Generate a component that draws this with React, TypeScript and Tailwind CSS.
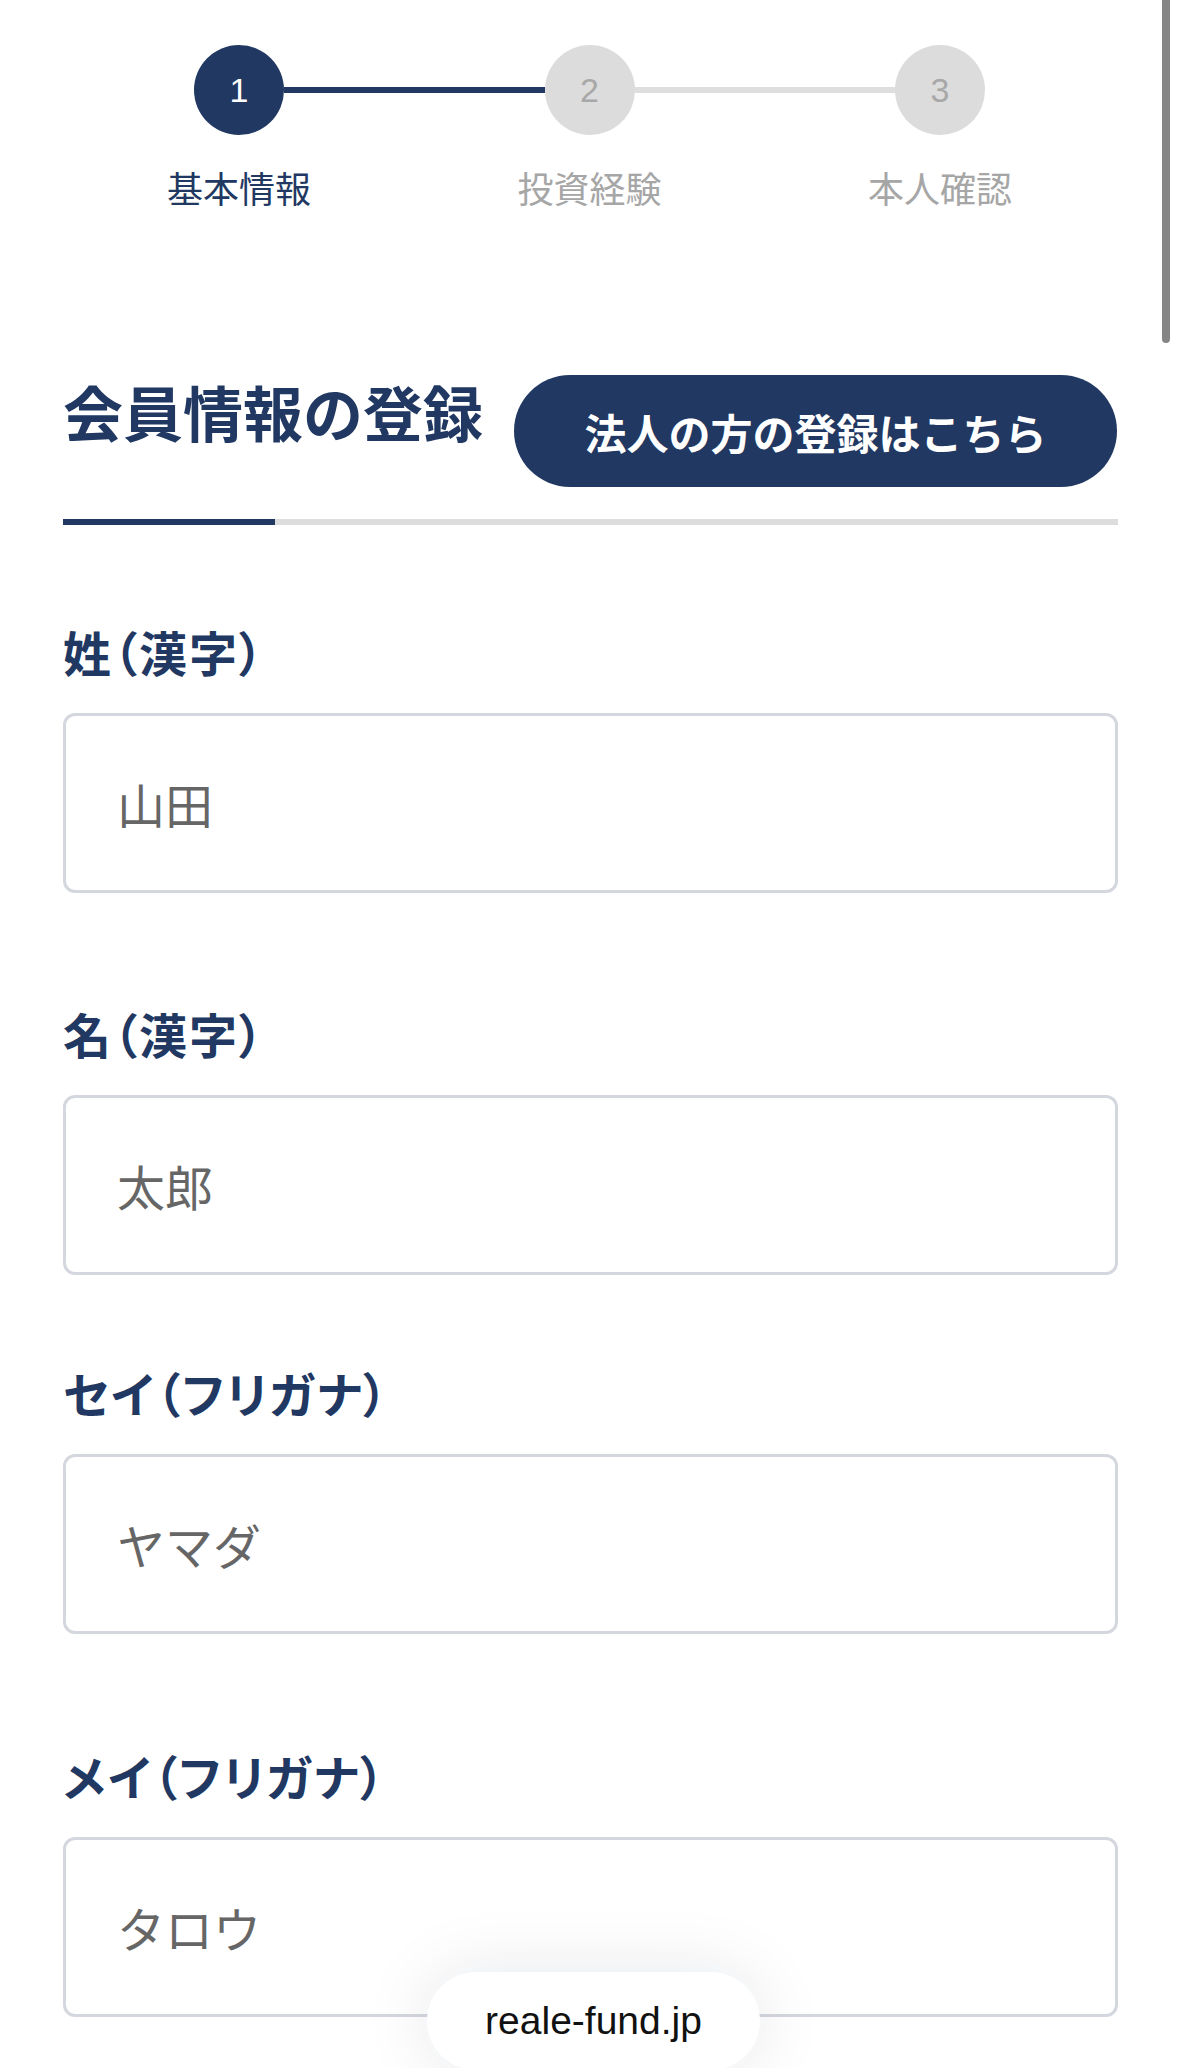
import React from "react";

const NAVY = "text-[#213862]";

function Step({ n, active }: { n: number; active: boolean }) {
  return (
    <div
      className={
        "flex h-[90px] w-[90px] shrink-0 items-center justify-center rounded-full font-['Liberation_Sans',sans-serif] text-[34px] " +
        (active ? "bg-[#213862] text-white" : "bg-[#dcdcdc] text-[#a8a8a8]")
      }
    >
      {n}
    </div>
  );
}

function StepLabel({ text, active }: { text: string; active: boolean }) {
  return (
    <div className="flex w-[90px] justify-center">
      <span
        className={
          "whitespace-nowrap text-[36px] leading-[54px] " +
          (active ? "text-[#213862]" : "text-[#a6a6a6]")
        }
      >
        {text}
      </span>
    </div>
  );
}

function Field({
  label,
  value,
  gapTop,
}: {
  label: string;
  value: string;
  gapTop: string;
}) {
  return (
    <div className={gapTop}>
      <div
        className={
          "text-[48px] font-bold leading-[72px] tracking-[2px] [font-feature-settings:'palt'] " +
          NAVY
        }
      >
        {label}
      </div>
      <div className="mt-[26px] flex h-[180px] items-center rounded-[12px] border-[3px] border-[#d5d7de] bg-white pl-[51px]">
        <span className="text-[48px] leading-none text-[#666666]">{value}</span>
      </div>
    </div>
  );
}

export default function App() {
  return (
    <div className="relative h-[2068px] w-[1179px] overflow-hidden bg-white font-['Noto_Sans_CJK_JP','Noto_Sans',sans-serif]">
      <div className="pl-[63px] pr-[61px]">
        {/* Stepper */}
        <div className="pt-[45px]">
          <div className="ml-[131px] mr-[133px] flex items-center">
            <Step n={1} active />
            <div className="h-[6px] flex-1 bg-[#213862]" />
            <Step n={2} active={false} />
            <div className="h-[6px] flex-1 bg-[#dedede]" />
            <Step n={3} active={false} />
          </div>
          <div className="ml-[131px] mr-[133px] mt-[25px] flex justify-between">
            <StepLabel text="基本情報" active />
            <StepLabel text="投資経験" active={false} />
            <StepLabel text="本人確認" active={false} />
          </div>
        </div>

        {/* Heading */}
        <div className="mt-[152px] flex items-start gap-[31px]">
          <h1
            className={
              "whitespace-nowrap text-[60px] font-bold leading-[90px] " + NAVY
            }
          >
            会員情報の登録
          </h1>
          <button className="mt-[9px] flex h-[112px] w-[603px] items-center justify-center rounded-full bg-[#213862] text-[42px] font-bold text-white">
            法人の方の登録はこちら
          </button>
        </div>
        <div className="mt-[32px] h-[6px] w-full bg-[#dddddd]">
          <div className="h-full w-[212px] bg-[#213862]" />
        </div>

        {/* Fields */}
        <Field label="姓（漢字）" value="山田" gapTop="mt-[90px]" />
        <Field label="名（漢字）" value="太郎" gapTop="mt-[104px]" />
        <Field label="セイ（フリガナ）" value="ヤマダ" gapTop="mt-[81px]" />
        <Field label="メイ（フリガナ）" value="タロウ" gapTop="mt-[105px]" />
      </div>

      {/* Browser URL pill */}
      <div className="absolute left-[427px] top-[1972px] flex h-[98px] w-[333px] items-center justify-center rounded-full bg-white shadow-[0_0_70px_rgba(20,30,60,0.10)]">
        <span className="font-['Liberation_Sans',sans-serif] text-[39px] text-[#111111]">
          reale-fund.jp
        </span>
      </div>

      {/* Scroll indicator */}
      <div className="absolute left-[1162px] top-[-10px] h-[353px] w-[8px] rounded-full bg-[#858585]" />
    </div>
  );
}
